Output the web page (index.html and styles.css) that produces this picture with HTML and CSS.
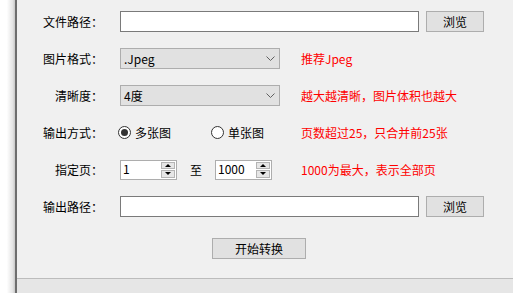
FILE: index.html
```html
<!DOCTYPE html>
<html lang="zh">
<head>
<meta charset="utf-8">
<title>PDF转图片</title>
<link rel="stylesheet" href="styles.css">
</head>
<body>
<div class="strip"></div>
<div class="main">
  <div class="panel">
    <div class="row">
      <label class="lbl">文件路径：</label>
      <div class="wide">
        <div class="textbox"></div>
        <div class="btn browse">浏览</div>
      </div>
    </div>
    <div class="row">
      <label class="lbl">图片格式：</label>
      <div class="select"><span class="val">.Jpeg</span><svg class="chev" width="9" height="5" viewBox="0 0 9 5"><path d="M0.5 0.5 L4.5 4.5 L8.5 0.5" fill="none" stroke="#606060" stroke-width="1"/></svg></div>
      <span class="hint">推荐Jpeg</span>
    </div>
    <div class="row">
      <label class="lbl">清晰度：</label>
      <div class="select"><span class="val">4度</span><svg class="chev" width="9" height="5" viewBox="0 0 9 5"><path d="M0.5 0.5 L4.5 4.5 L8.5 0.5" fill="none" stroke="#606060" stroke-width="1"/></svg></div>
      <span class="hint">越大越清晰，图片体积也越大</span>
    </div>
    <div class="row">
      <label class="lbl">输出方式：</label>
      <div class="radios">
        <span class="radio-item"><span class="radio checked"></span>多张图</span>
        <span class="radio-item"><span class="radio"></span>单张图</span>
      </div>
      <span class="hint">页数超过25，只合并前25张</span>
    </div>
    <div class="row">
      <label class="lbl">指定页：</label>
      <div class="range">
        <div class="spin"><span class="num">1</span><div class="arrows"><span class="up"></span><span class="down"></span></div></div>
        <span class="to">至</span>
        <div class="spin"><span class="num">1000</span><div class="arrows"><span class="up"></span><span class="down"></span></div></div>
      </div>
      <span class="hint">1000为最大，表示全部页</span>
    </div>
    <div class="row">
      <label class="lbl">输出路径：</label>
      <div class="wide">
        <div class="textbox"></div>
        <div class="btn browse">浏览</div>
      </div>
    </div>
    <div class="actions">
      <div class="btn start">开始转换</div>
    </div>
  </div>
  <div class="status"></div>
</div>
</body>
</html>
```
FILE: styles.css
```css
html, body {
  margin: 0;
  padding: 0;
}
body {
  width: 513px;
  height: 293px;
  overflow: hidden;
  display: flex;
  background: #ffffff;
  font-family: "Noto Sans CJK SC", "Noto Sans", sans-serif;
  font-size: 12px;
  color: #000;
}
.strip {
  width: 15px;
  flex: none;
  background: linear-gradient(to right, #ffffff 0%, #ffffff 45%, #e4e4e4 85%, #c8c8c8 100%);
  border-right: 2px solid #6e6e6e;
}
.main {
  flex: 1;
  display: flex;
  flex-direction: column;
  background: #f0f0f0;
}
.panel {
  flex: 1;
  padding-top: 11px;
  display: flex;
  flex-direction: column;
  gap: 16px;
}
.status {
  height: 14px;
  border-top: 1px solid #bcbcbc;
  background: #e6e6e6;
}
.row {
  height: 21px;
  display: grid;
  grid-template-columns: 86px 164px 1fr;
  column-gap: 17px;
  align-items: center;
}
.lbl {
  text-align: right;
  white-space: nowrap;
  line-height: 21px;
}
.wide {
  grid-column: 2 / 4;
  display: flex;
  gap: 7px;
  height: 21px;
}
.textbox {
  width: 297px;
  height: 19px;
  background: #fff;
  border: 1px solid #7a7a7a;
}
.btn {
  box-sizing: border-box;
  height: 21px;
  background: #e1e1e1;
  border: 1px solid #adadad;
  display: flex;
  align-items: center;
  justify-content: center;
  line-height: 1;
}
.browse {
  width: 58px;
}
.select {
  box-sizing: border-box;
  width: 160px;
  height: 21px;
  background: #e1e1e1;
  border: 1px solid #adadad;
  display: flex;
  align-items: center;
  justify-content: space-between;
  padding: 0 4px 0 3px;
}
.val {
  line-height: 1;
}
.chev {
  display: block;
}
.hint {
  color: #ff0000;
  white-space: nowrap;
  line-height: 21px;
}
.radios {
  display: flex;
  gap: 40px;
  margin-left: -2px;
}
.radio-item {
  display: flex;
  align-items: center;
  gap: 4px;
  white-space: nowrap;
}
.radio {
  box-sizing: border-box;
  width: 13px;
  height: 13px;
  border: 1px solid #333333;
  border-radius: 50%;
  background: #fff;
  display: flex;
  align-items: center;
  justify-content: center;
}
.radio.checked::after {
  content: "";
  width: 7px;
  height: 7px;
  border-radius: 50%;
  background: #333333;
}
.range {
  display: flex;
  align-items: center;
  gap: 13px;
}
.spin {
  box-sizing: border-box;
  width: 57px;
  height: 20px;
  background: #fff;
  border: 1px solid #adadad;
  display: flex;
  justify-content: space-between;
  padding: 1px 1px 1px 2px;
}
.num {
  line-height: 14px;
}
.arrows {
  width: 14px;
  display: flex;
  flex-direction: column;
  gap: 1px;
}
.arrows span {
  flex: 1;
  background: #e6e6e6;
  border: 1px solid #b4b4b4;
  display: flex;
  align-items: center;
  justify-content: center;
}
.arrows .up::after {
  content: "";
  border-left: 3px solid transparent;
  border-right: 3px solid transparent;
  border-bottom: 3px solid #000;
}
.arrows .down::after {
  content: "";
  border-left: 3px solid transparent;
  border-right: 3px solid transparent;
  border-top: 3px solid #000;
}
.to {
  line-height: 1;
}
.actions {
  margin-top: 5px;
  padding-left: 195px;
  display: flex;
}
.start {
  width: 94px;
}
```
